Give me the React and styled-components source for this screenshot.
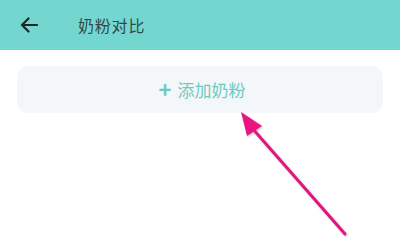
import React from "react";
import styled, { createGlobalStyle } from "styled-components";

const Global = createGlobalStyle`
  html, body { margin: 0; padding: 0; background: #ffffff; }
  body { font-family: "Noto Sans CJK SC", "Noto Sans", sans-serif; }
`;

const Page = styled.div`
  position: relative;
  width: 400px;
  height: 245px;
  background: #ffffff;
  overflow: hidden;
`;

const Header = styled.header`
  height: 50px;
  background: #74d7cf;
  display: flex;
  align-items: center;
  padding-left: 20px;
  box-sizing: border-box;
`;

const BackButton = styled.button`
  width: 18px;
  height: 18px;
  padding: 0;
  border: 0;
  background: transparent;
  display: flex;
  align-items: center;
  justify-content: center;
  color: #1b2626;
`;

const Title = styled.h1`
  margin: 0 0 0 40px;
  font-size: 16px;
  font-weight: 400;
  color: #33474a;
  letter-spacing: 0.8px;
`;

const Body = styled.main`
  padding: 16px 17px 0 17px;
`;

const AddCard = styled.div`
  height: 47px;
  border-radius: 11px;
  background: #f4f7f9;
  display: flex;
  align-items: center;
  justify-content: center;
  gap: 6px;
  color: #6fc9c3;
  font-size: 17px;
  padding-left: 4px;
`;

const Plus = styled.span`
  font-size: 22px;
  font-weight: 700;
  line-height: 1;
  margin-top: -3px;
`;

const Overlay = styled.svg`
  position: absolute;
  left: 0;
  top: 0;
  pointer-events: none;
`;

export default function App() {
  return (
    <>
      <Global />
      <Page>
        <Header>
          <BackButton aria-label="back">
            <svg width="18" height="16" viewBox="0 0 18 16" fill="none">
              <path d="M17 8H2M8.5 1.5L2 8l6.5 6.5" stroke="currentColor" strokeWidth="2.2" strokeLinecap="round" strokeLinejoin="round" />
            </svg>
          </BackButton>
          <Title>奶粉对比</Title>
        </Header>
        <Body>
          <AddCard>
            <Plus>+</Plus>
            <span>添加奶粉</span>
          </AddCard>
        </Body>
        <Overlay width="400" height="245" viewBox="0 0 400 245">
          <defs>
            <filter id="sh" x="-20%" y="-20%" width="140%" height="140%">
              <feDropShadow dx="1" dy="1" stdDeviation="1.2" floodColor="#000" floodOpacity="0.25" />
            </filter>
          </defs>
          <g filter="url(#sh)">
            <line x1="345" y1="234" x2="252" y2="128" stroke="#e0177e" strokeWidth="3" strokeLinecap="round" />
            <polygon points="241,112 262,126 247,136" fill="#ea137f" />
          </g>
        </Overlay>
      </Page>
    </>
  );
}
